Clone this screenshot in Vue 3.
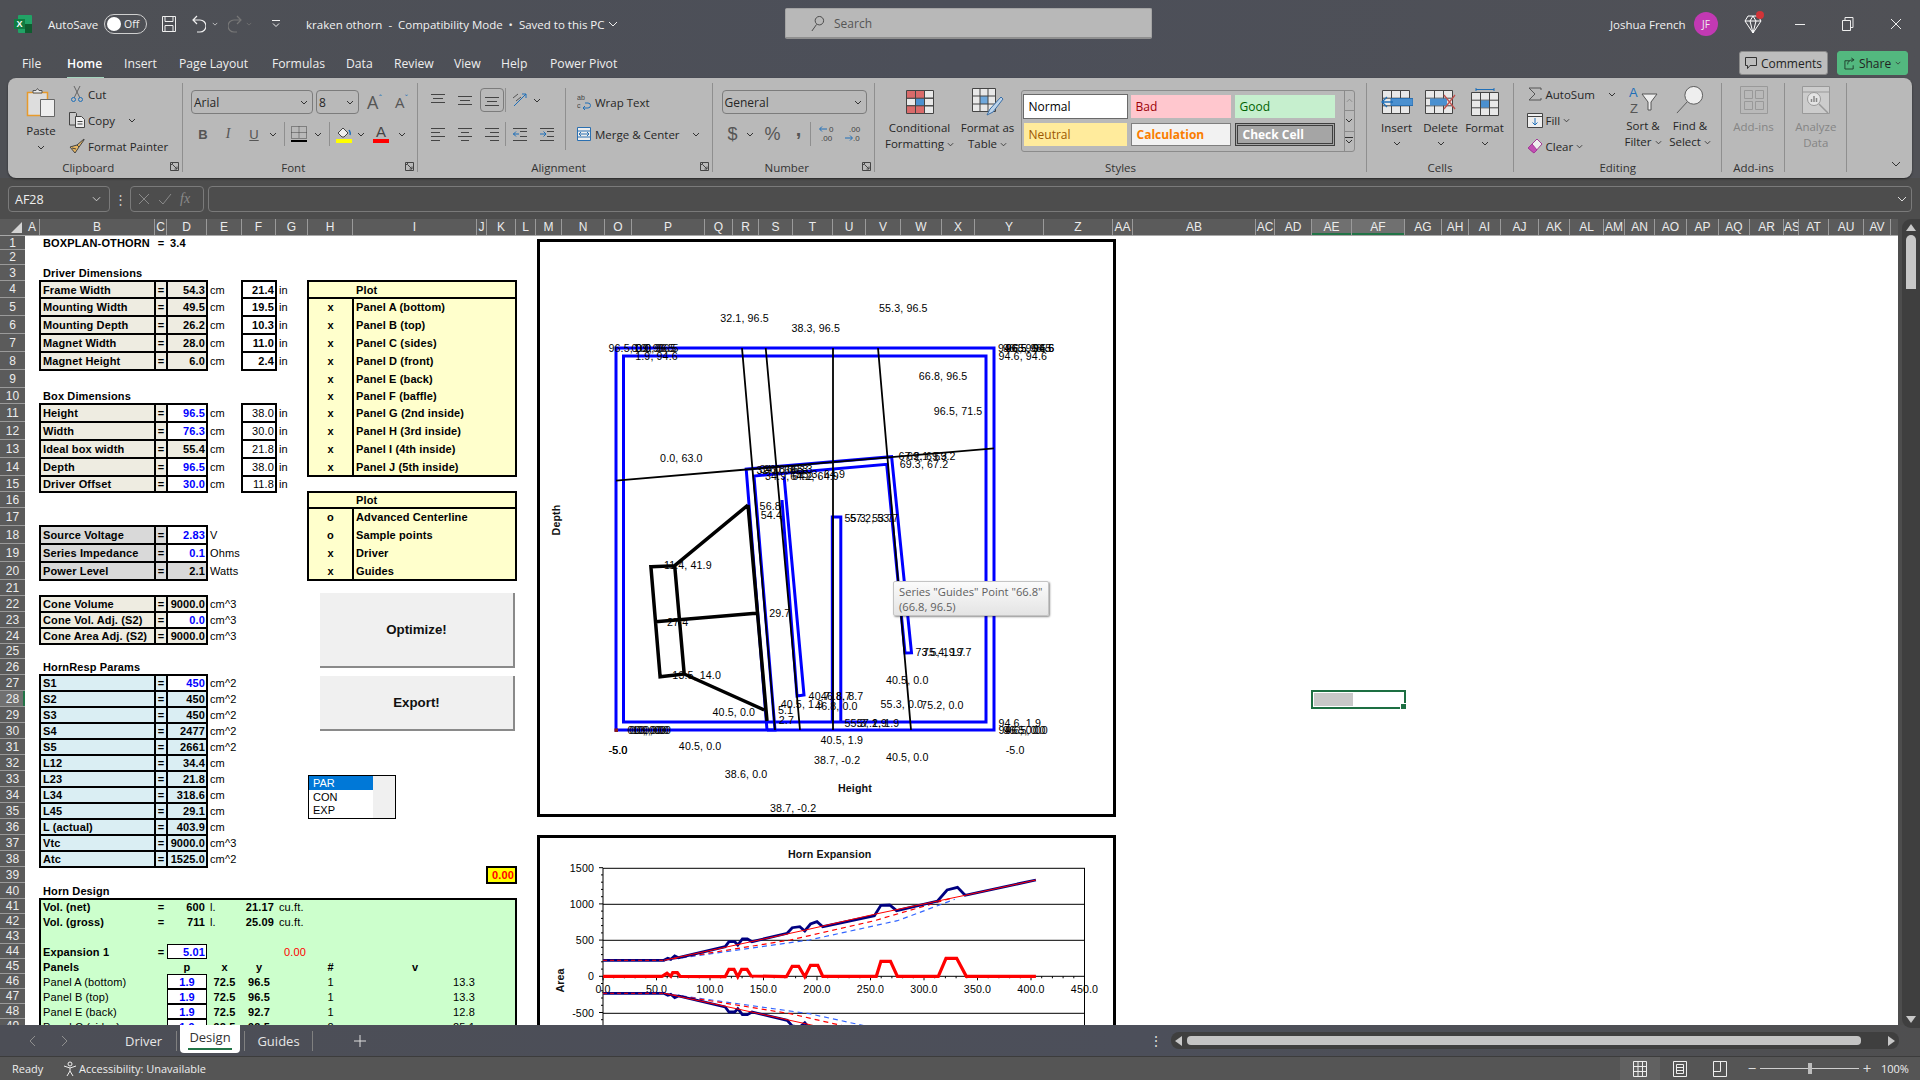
<template>
  <div class="app">
    <svg class="sprite" aria-hidden="true">
      <symbol id="chev" viewBox="0 0 8 5"><path d="M1 1l3 3 3-3" fill="none" stroke="#333" stroke-width="1"/></symbol>
      <symbol id="launch" viewBox="0 0 9 9"><path d="M.5.5h8v8h-8zM.5 2.5h2v-2M3 3l4 4M7 4.500v2.500h-2.500" fill="none" stroke="#444"/></symbol>
      <symbol id="grid" viewBox="0 0 28 24"><path d="M.5.500h27v23h-27z" fill="#e8e8e8" stroke="#444"/><path d="M9.500.5v23M18.500.5v23M.5 8.200h27M.5 15.800h27" stroke="#444" fill="none"/></symbol>
    </svg>

    <!-- title bar -->
    <header class="titlebar">
      <div class="tb-left">
        <svg class="xl-logo" viewBox="0 0 18 18" width="18" height="18">
          <rect x="4" y="0" width="14" height="18" rx="1" fill="#21a366"/>
          <rect x="11" y="9" width="7" height="9" fill="#0e5c2f"/>
          <rect x="0" y="4" width="11" height="10" fill="#107c41"/>
          <text x="5.500" y="12" text-anchor="middle" font-size="9" font-weight="700" fill="#fff" font-family="Liberation Sans, sans-serif">X</text>
        </svg>
        <span class="autosave">AutoSave</span>
        <span class="toggle"><i></i>Off</span>
        <svg class="tb-save" viewBox="0 0 14 16" width="14" height="16"><path d="M.5.5h13v15H.5zM3 .5v5h8v-5M3 15.500v-6h8v6" fill="none" stroke="#eee"/></svg>
        <svg class="tb-undo" viewBox="0 0 14 18" width="14" height="18"><path d="M5 1L1 5l4 4M1 5h7a5 5 0 0 1 0 12H5" fill="none" stroke="#f0f0f0" stroke-width="1.200"/></svg>
        <svg class="tb-chev" viewBox="0 0 8 5" width="6" height="4"><path d="M1 1l3 3 3-3" fill="none" stroke="#ddd"/></svg>
        <svg class="tb-redo" viewBox="0 0 14 18" width="14" height="18"><path d="M9 1l4 4-4 4M13 5H6a5 5 0 0 0 0 12h3" fill="none" stroke="#777" stroke-width="1.200"/></svg>
        <svg class="tb-chev dimmed" viewBox="0 0 8 5" width="6" height="4"><path d="M1 1l3 3 3-3" fill="none" stroke="#777"/></svg>
        <svg class="tb-cust" viewBox="0 0 8 8" width="8" height="8"><path d="M0 .5h8M1 3.500l3 3 3-3" fill="none" stroke="#eee"/></svg>
        <span class="doc-title">kraken othorn&nbsp; -&nbsp; Compatibility Mode&nbsp; •&nbsp; Saved to this PC</span>
        <svg class="tb-doc-chev" viewBox="0 0 10 6" width="10" height="6"><path d="M1 1l4 4 4-4" fill="none" stroke="#eee"/></svg>
      </div>
      <div class="search">
        <svg viewBox="0 0 16 18" width="15" height="17"><circle cx="10" cy="6" r="4.500" fill="none" stroke="#444"/><path d="M7 10l-5 7" stroke="#444"/></svg>
        <span>Search</span>
      </div>
      <div class="tb-right">
        <span class="user">Joshua French</span>
        <span class="avatar">JF</span>
        <span class="gem">
          <svg viewBox="0 0 18 20" width="18" height="20"><path d="M4 2h10l3 5-8 12L1 7zM1 7h16M6 7l3 12 3-12M6 7l3-5 3 5" fill="none" stroke="#fff"/></svg>
          <i></i>
        </span>
        <span class="win"><svg width="10" height="10"><path d="M0 5.500h10" stroke="#eee"/></svg></span>
        <span class="win"><svg width="12" height="14"><path d="M.5 3.500h8v10h-8zM3 3.500v-3h8v10h-2.500" fill="none" stroke="#eee"/></svg></span>
        <span class="win"><svg width="12" height="12"><path d="M1 1l10 10M11 1L1 11" stroke="#eee"/></svg></span>
      </div>
    </header>

    <!-- menu tabs -->
    <nav class="menutabs">
      <div class="tablist">
        <span v-for="t in menuTabs" :key="t" :class="{ on: t === 'Home' }"><b>{{ t }}</b></span>
      </div>
      <div class="share-wrap">
        <button class="comments">
          <svg viewBox="0 0 12 12" width="12" height="12"><path d="M.5.5h11v8H5l-2.500 3v-3h-2z" fill="none" stroke="#333"/></svg>
          Comments
        </button>
        <button class="share">
          <svg viewBox="0 0 12 14" width="11" height="13"><path d="M6 4H1v9h9V9M4 8c0-3 2-5 6-5M8 1l3 2-3 2" fill="none" stroke="#1f3a2b"/></svg>
          Share
          <svg width="6" height="4"><use href="#chev"/></svg>
        </button>
      </div>
    </nav>

    <!-- ribbon -->
    <section class="ribbon">
      <div class="group g-clip">
        <div class="body clip-body">
          <div class="paste">
            <svg viewBox="0 0 30 30" width="30" height="30">
              <path d="M1.500 5.500h20v23h-20z" fill="#ddd" stroke="#e79a2c" stroke-width="1.500"/>
              <path d="M7 6V3.500h3l1.500-2 1.500 2h3V6z" fill="#e8e8e8" stroke="#555"/>
              <path d="M14.500 12.500h14v17h-14z" fill="#eee" stroke="#666"/>
            </svg>
            <span>Paste</span>
            <svg class="ch" width="8" height="5"><use href="#chev"/></svg>
          </div>
          <div class="clip-rows">
            <div class="row">
              <svg class="ico" viewBox="0 0 12 16" width="12" height="16"><path d="M3 0l6 12M9 0L3 12" stroke="#666" fill="none"/><circle cx="2.500" cy="13.500" r="2" fill="none" stroke="#1f6fb8"/><circle cx="9.500" cy="13.500" r="2" fill="none" stroke="#1f6fb8"/></svg>
              <span>Cut</span>
            </div>
            <div class="row">
              <svg class="ico" viewBox="0 0 16 16" width="16" height="16"><path d="M.5.500h6l1 1V13h-7z" fill="#c8c8c8" stroke="#444"/><path d="M6.500 4.500h6l3 3v8h-9z" fill="#eee" stroke="#444"/><path d="M8.500 9.500h5M8.500 12h5" stroke="#444"/></svg>
              <span>Copy</span>
              <svg class="ch copy-ch" width="8" height="5"><use href="#chev"/></svg>
            </div>
            <div class="row">
              <svg class="ico" viewBox="0 0 16 16" width="16" height="16"><path d="M15 1L8 7l2 2 5-7zM8 7L1 9l5 6 4-6z" fill="#e8b660" stroke="#444"/><path d="M3 10l4 1" stroke="#444"/></svg>
              <span>Format Painter</span>
            </div>
          </div>
        </div>
        <div class="label off-launch">Clipboard</div>
        <svg class="launch" width="9" height="9"><use href="#launch"/></svg>
      </div>

      <div class="group g-font">
        <div class="body two-rows">
          <div class="font-r1">
            <span class="combo font-name">Arial<svg width="8" height="5"><use href="#chev"/></svg></span>
            <span class="combo font-size">8<svg width="8" height="5"><use href="#chev"/></svg></span>
            <span class="grow">A<sup>ˆ</sup></span>
            <span class="shrink">A<sup>ˇ</sup></span>
          </div>
          <div class="font-r2">
            <span class="fb">B</span>
            <span class="fi">I</span>
            <span class="fu">U</span>
            <svg width="8" height="5"><use href="#chev"/></svg>
            <i class="sep"></i>
            <svg viewBox="0 0 16 16" width="16" height="16"><path d="M.5.500h15v12H.5z" fill="none" stroke="#444" stroke-dasharray="1 1"/><path d="M8 .5v12M.5 6.500h15" stroke="#444" stroke-dasharray="1 1"/><path d="M0 15h16" stroke="#000" stroke-width="2"/></svg>
            <svg width="8" height="5"><use href="#chev"/></svg>
            <i class="sep"></i>
            <svg viewBox="0 0 16 18" width="16" height="18"><path d="M2 8l5-5 5 5-4 4H6z" fill="#eee" stroke="#444"/><path d="M13 5c1 2 2 3 1 5" stroke="#1f6fb8" stroke-width="1.500" fill="none"/><rect y="14" width="16" height="4" fill="#ff0"/></svg>
            <svg width="8" height="5"><use href="#chev"/></svg>
            <span class="fcolor">A<i></i></span>
            <svg width="8" height="5"><use href="#chev"/></svg>
          </div>
        </div>
        <div class="label off-launch">Font</div>
        <svg class="launch" width="9" height="9"><use href="#launch"/></svg>
      </div>

      <div class="group g-align">
        <div class="body align-body">
          <div class="align-left">
            <div class="align-r1">
              <svg viewBox="0 0 14 14" width="14" height="14"><path d="M0 1.500h14M2 5.500h10M0 9.500h14" stroke="#444"/></svg>
              <svg viewBox="0 0 14 14" width="14" height="14"><path d="M0 3.500h14M2 7.500h10M0 11.500h14" stroke="#444"/></svg>
              <span class="sel"><svg viewBox="0 0 14 14" width="14" height="14"><path d="M0 4.500h14M2 8.500h10M0 12.500h14" stroke="#444"/></svg></span>
              <span class="orient">
                <svg viewBox="0 0 16 16" width="16" height="16"><path d="M2 14L14 2M10 2h4v4" stroke="#1f6fb8" fill="none"/><path d="M1 6l5-4M4 9l5-4" stroke="#555"/></svg>
              </span>
              <svg width="8" height="5"><use href="#chev"/></svg>
            </div>
            <div class="align-r2">
              <svg viewBox="0 0 14 14" width="14" height="14"><path d="M0 1.500h14M0 5.500h9M0 9.500h14M0 13.500h9" stroke="#444"/></svg>
              <svg viewBox="0 0 14 14" width="14" height="14"><path d="M0 1.500h14M3 5.500h8M0 9.500h14M3 13.500h8" stroke="#444"/></svg>
              <svg viewBox="0 0 14 14" width="14" height="14"><path d="M0 1.500h14M5 5.500h9M0 9.500h14M5 13.500h9" stroke="#444"/></svg>
              <span class="orient"><svg viewBox="0 0 14 14" width="14" height="14"><path d="M0 1.500h14M0 13.500h14M7 4.500h7M7 9.500h7" stroke="#444"/><path d="M6 7H0M3 4.500L.5 7 3 9.500" stroke="#1f6fb8" fill="none"/></svg></span>
              <svg viewBox="0 0 14 14" width="14" height="14"><path d="M0 1.500h14M0 13.500h14M7 4.500h7M7 9.500h7" stroke="#444"/><path d="M0 7h6M3.500 4.500L6 7 3.500 9.500" stroke="#1f6fb8" fill="none"/></svg>
            </div>
          </div>
          <div class="align-right">
            <div class="row">
              <svg viewBox="0 0 14 16" width="14" height="16"><text x="0" y="6" font-size="7" fill="#444" font-family="Liberation Sans, sans-serif">ab</text><text x="0" y="14" font-size="7" fill="#444" font-family="Liberation Sans, sans-serif">c</text><path d="M8 9h3a2 2 0 0 1 0 5H6M8 12l-2 2 2 2" stroke="#1f6fb8" fill="none"/></svg>
              <span>Wrap Text</span>
            </div>
            <div class="row">
              <svg viewBox="0 0 14 16" width="14" height="16"><path d="M.5 1.500h13v13H.5z" fill="#eee" stroke="#2a6fb0"/><path d="M.5 5h13M.5 11h13M2 8h10M4 6L2 8l2 2M10 6l2 2-2 2" stroke="#2a6fb0" fill="none"/></svg>
              <span>Merge &amp; Center</span>
              <svg class="ch merge-ch" width="8" height="5"><use href="#chev"/></svg>
            </div>
          </div>
        </div>
        <div class="label off-launch">Alignment</div>
        <svg class="launch" width="9" height="9"><use href="#launch"/></svg>
      </div>

      <div class="group g-number">
        <div class="body two-rows">
          <span class="combo num-fmt">General<svg width="8" height="5"><use href="#chev"/></svg></span>
          <div class="num-r2">
            <span class="big">$</span>
            <svg width="8" height="5"><use href="#chev"/></svg>
            <span class="big">%</span>
            <span class="big comma">,</span>
            <i class="sep"></i>
            <svg viewBox="0 0 16 18" width="16" height="18"><path d="M8 4H1M3 1.500L.5 4 3 6.500" stroke="#1f6fb8" fill="none"/><text x="10" y="7" font-size="8" fill="#444" font-family="Liberation Sans, sans-serif">0</text><text x="2" y="16" font-size="8" fill="#444" font-family="Liberation Sans, sans-serif">.00</text></svg>
            <svg viewBox="0 0 16 18" width="16" height="18"><text x="4" y="7" font-size="8" fill="#444" font-family="Liberation Sans, sans-serif">.00</text><path d="M0 13h7M5 10.500L7.500 13 5 15.500" stroke="#1f6fb8" fill="none"/><text x="8" y="16" font-size="8" fill="#444" font-family="Liberation Sans, sans-serif">.0</text></svg>
          </div>
        </div>
        <div class="label off-launch">Number</div>
        <svg class="launch" width="9" height="9"><use href="#launch"/></svg>
      </div>

      <div class="group g-styles">
        <div class="body styles-body">
          <div class="large w-cond">
            <svg viewBox="0 0 28 24" width="28" height="24">
              <use href="#grid" width="28" height="24"/>
              <rect x="1" y="1" width="17" height="7" fill="#d96a6a"/><rect x="1" y="16" width="17" height="7" fill="#d96a6a"/><rect x="10" y="8.500" width="8" height="7" fill="#4a90d0"/>
              <path d="M9.500.5v23M18.500.5v23M.5 8.200h27M.5 15.800h27" stroke="#444"/>
            </svg>
            <span class="t">Conditional</span>
            <span class="t">Formatting <svg width="7" height="5"><use href="#chev"/></svg></span>
          </div>
          <div class="large w-table">
            <svg viewBox="0 0 32 28" width="32" height="28">
              <path d="M.5.500h23v23H.5z" fill="#e8e8e8" stroke="#444"/>
              <rect x="8" y="8" width="8" height="8" fill="#6fa8dc"/>
              <path d="M8 .5v23M16 .5v23M.5 8h23M.5 16h23" stroke="#444"/>
              <path d="M29 9L18 21l-3 6 6-3L31 11z" fill="#bcd3ea" stroke="#3a6ea5"/>
            </svg>
            <span class="t">Format as</span>
            <span class="t">Table <svg width="7" height="5"><use href="#chev"/></svg></span>
          </div>
          <div class="gallery">
            <div class="swatches">
              <span class="s-normal">Normal</span>
              <span class="s-bad">Bad</span>
              <span class="s-good">Good</span>
              <span class="s-neutral">Neutral</span>
              <span class="s-calc">Calculation</span>
              <span class="s-check">Check Cell</span>
            </div>
            <div class="gal-scroll">
              <span class="gal-up"><svg width="7" height="5" viewBox="0 0 8 5"><path d="M1 4l3-3 3 3" fill="none" stroke="#888"/></svg></span>
              <span><svg width="8" height="5"><use href="#chev"/></svg></span>
              <span><svg width="8" height="8" viewBox="0 0 8 8"><path d="M0 .5h8M1 3l3 3 3-3" fill="none" stroke="#333"/></svg></span>
            </div>
          </div>
        </div>
        <div class="label">Styles</div>
      </div>

      <div class="group g-cells">
        <div class="body cells-body">
          <div class="large w-cell">
            <svg viewBox="0 0 32 24" width="32" height="24">
              <use href="#grid" x="1" width="28" height="24"/>
              <rect x="10" y="8.500" width="22" height="7" fill="#4a90d0" stroke="#2a6fb0"/>
              <path d="M12 12H1M6 7l-5 5 5 5" stroke="#1f6fb8" fill="none" stroke-width="1.300"/>
            </svg>
            <span class="t">Insert</span>
            <svg class="ch" width="8" height="5"><use href="#chev"/></svg>
          </div>
          <div class="large w-cell">
            <svg viewBox="0 0 32 24" width="32" height="24">
              <use href="#grid" width="28" height="24"/>
              <rect x="5" y="8.500" width="17" height="7" fill="#4a90d0"/>
              <path d="M19 5l11 14M30 5L19 19" stroke="#c0504d" stroke-width="1.300"/>
            </svg>
            <span class="t">Delete</span>
            <svg class="ch" width="8" height="5"><use href="#chev"/></svg>
          </div>
          <div class="large w-cell">
            <svg viewBox="0 0 28 28" width="28" height="28">
              <path d="M5 1.500h18M5 0v3M23 0v3" stroke="#1f6fb8"/>
              <g transform="translate(0 4)"><use href="#grid" width="28" height="24"/><rect x="10" y="8.500" width="8" height="7" fill="#4a90d0"/></g>
            </svg>
            <span class="t">Format</span>
            <svg class="ch" width="8" height="5"><use href="#chev"/></svg>
          </div>
        </div>
        <div class="label">Cells</div>
      </div>

      <div class="group g-edit">
        <div class="body edit-body">
          <div class="edit-rows">
            <div class="row">
              <svg class="eico" viewBox="0 0 14 14" width="14" height="14"><path d="M13 3V1H1l6 6-6 6h12v-2" fill="none" stroke="#555"/></svg>
              <span>AutoSum</span>
              <svg class="ch sum-ch" width="8" height="5"><use href="#chev"/></svg>
            </div>
            <div class="row">
              <svg class="eico" viewBox="0 0 16 16" width="16" height="16"><path d="M.5 1.500h15v14H.5z" fill="#eee" stroke="#444"/><path d="M.5 4.500h15" stroke="#444"/><path d="M8 6v7M5.500 10.500L8 13l2.500-2.500" stroke="#1f6fb8" fill="none"/></svg>
              <span>Fill</span>
              <svg class="ch" width="7" height="5"><use href="#chev"/></svg>
            </div>
            <div class="row">
              <svg class="eico" viewBox="0 0 16 16" width="16" height="16"><path d="M10 1l5 5-8 9-6-5z" fill="#eee" stroke="#a43a97"/><path d="M1 10l6 5 3-3-5-6z" fill="#c24fb3" stroke="#a43a97"/></svg>
              <span>Clear</span>
              <svg class="ch" width="7" height="5"><use href="#chev"/></svg>
            </div>
          </div>
          <div class="large w-sort">
            <svg viewBox="0 0 30 28" width="30" height="28">
              <text x="1" y="11" font-size="13" fill="#1f6fb8" font-family="Liberation Sans, sans-serif">A</text>
              <text x="2" y="27" font-size="13" fill="#555" font-family="Liberation Sans, sans-serif">Z</text>
              <path d="M14 8h15l-6 8v8h-3v-8z" fill="#eee" stroke="#555"/>
            </svg>
            <span class="t">Sort &amp;</span>
            <span class="t">Filter <svg width="7" height="5"><use href="#chev"/></svg></span>
          </div>
          <div class="large w-find">
            <svg viewBox="0 0 30 30" width="30" height="30">
              <circle cx="19" cy="10" r="9.500" fill="#eee" stroke="#555"/>
              <path d="M12 17L1 29" stroke="#555"/>
            </svg>
            <span class="t">Find &amp;</span>
            <span class="t">Select <svg width="7" height="5"><use href="#chev"/></svg></span>
          </div>
        </div>
        <div class="label">Editing</div>
      </div>

      <div class="group g-addin">
        <div class="body large-solo">
          <div class="large dim">
            <svg viewBox="0 0 28 28" width="28" height="28"><path d="M.5.500h27v27H.5zM4.500 4.500h8v8h-8zM15.500 4.500h8v8h-8zM4.500 15.500h8v8h-8zM15.500 15.500h8v8h-8z" fill="none" stroke="#999"/></svg>
            <span class="t">Add-ins</span>
          </div>
        </div>
        <div class="label">Add-ins</div>
      </div>

      <div class="group g-analyze">
        <div class="body large-solo">
          <div class="large dim">
            <svg viewBox="0 0 28 28" width="28" height="28"><path d="M.5.500h27v27H.5zM.5 6h27" fill="#ccc" stroke="#999"/><circle cx="12" cy="13" r="6.500" fill="#e4e4e4" stroke="#999"/><path d="M17 18l9 9" stroke="#999" stroke-width="1.500"/><path d="M9.500 16v-3M12 16v-6M14.500 16v-4" stroke="#888" stroke-width="1.500"/></svg>
            <span class="t">Analyze</span>
            <span class="t">Data</span>
          </div>
        </div>
      </div>

      <svg class="collapse" viewBox="0 0 10 6" width="10" height="6"><path d="M1 1l4 4 4-4" fill="none" stroke="#333"/></svg>
    </section>

    <!-- formula bar -->
    <div class="fbar">
      <div class="namebox"><span>AF28</span><svg viewBox="0 0 10 6" width="9" height="6"><path d="M1 1l4 4 4-4" fill="none" stroke="#ddd"/></svg></div>
      <span class="fdots">⋮</span>
      <div class="fxbox">
        <svg viewBox="0 0 12 12" width="12" height="12"><path d="M1 1l10 10M11 1L1 11" stroke="#8a8a8a"/></svg>
        <svg viewBox="0 0 14 12" width="14" height="12"><path d="M1 7l4 4 8-10" fill="none" stroke="#8a8a8a"/></svg>
        <em>fx</em>
      </div>
      <div class="finput"><svg viewBox="0 0 10 6" width="10" height="6"><path d="M1 1l4 4 4-4" fill="none" stroke="#ddd"/></svg></div>
    </div>

    <!-- sheet area -->
    <div class="main">
      <div class="sheet-col">
        <div class="colhead" :style="{ gridTemplateColumns: colTemplate }">
          <div class="corner"><i></i></div>
          <div v-for="(n, i) in colNames" :key="i" :class="['ch-cell', { act: n === 'AE' || n === 'AF' }]">{{ n }}</div>
        </div>
        <div class="sheet">
          <div class="rowhead">
            <div v-for="(h, i) in rowHeights" :key="i" :class="['rh-cell', { act: i + 1 === 28 }]" :style="{ height: h + 'px' }">{{ i + 1 }}</div>
          </div>
          <div class="grid" :style="{ gridTemplateColumns: gridTemplate, gridTemplateRows: rowTemplate }">
            <div v-for="c in cells" :key="c.key" :class="['cell', c.cls]" :style="c.style">{{ c.text }}</div>

            <!-- floating objects -->
            <button class="xl-btn b-opt">Optimize!</button>
            <button class="xl-btn b-exp">Export!</button>
            <div class="listbox">
              <div class="lb-items"><div class="lb-sel">PAR</div><div>CON</div><div>EXP</div></div>
              <div class="lb-bar"></div>
            </div>

            <svg class="chart c1" viewBox="537 239 579 578" width="579" height="578">
              <rect x="538.500" y="240.500" width="576" height="575" fill="#fff" stroke="#000" stroke-width="3"/>
              <g fill="none" stroke="#0000ff" stroke-width="3">
                <rect x="616" y="348" width="378" height="382"/>
                <rect x="623.500" y="356" width="362.500" height="366"/>
                <polyline points="767,730 746.200,469 891.600,456.700 911.500,652.700 905,653 886.700,464.300 754,476 775,730 767,730"/>
                <polyline points="784.100,476.700 804,695 797,696 782,500"/>
                <polyline points="832.300,722 832.300,517 840.800,517 840.800,722"/>
              </g>
              <g fill="none" stroke="#000" stroke-width="1.800">
                <path d="M742 348L775 730M765.700 348L800 730M833 348V730M878 348L911 730M616 480.700L994 448.300"/>
              </g>
              <g fill="none" stroke="#000" stroke-width="3.500">
                <path d="M650.900 566.700L674.700 565.700L684.200 674L660.100 676.700ZM655.500 621.700L755.800 613.300M674.700 565.700L748 505M684.200 674L764.200 710M748 505L767 721"/>
              </g>
              <rect x="614.500" y="728.500" width="3.500" height="3.500" fill="#8b1a1a"/>
              <text v-for="(l, i) in plotLabels" :key="i" class="lbl" :x="l.x" :y="l.y">{{ l.t }}</text>
              <text class="lbl-b" x="838" y="791.500">Height</text>
              <text class="lbl-b" transform="translate(559.500 520) rotate(-90)" text-anchor="middle">Depth</text>
            </svg>
            <div class="tooltip">Series "Guides" Point "66.8"<br>(66.8, 96.5)</div>

            <svg class="chart c2" viewBox="537 835 579 300" width="579" height="300">
              <rect x="538.500" y="836.500" width="576" height="296" fill="#fff" stroke="#000" stroke-width="3"/>
              <text class="lbl-b" x="829.700" y="857.500" text-anchor="middle">Horn Expansion</text>
              <rect x="603" y="868.300" width="481.500" height="260" fill="none" stroke="#000" stroke-width="1"/>
              <path d="M603 904.300H1084.500M603 940.300H1084.500M603 1013.300H1084.500" stroke="#000" stroke-width="1"/>
              <path d="M603 976.300H1084.500" stroke="#000" stroke-width="1"/>
              <path :d="ticks" stroke="#000" stroke-width="1" fill="none"/>
              <text v-for="y in yTicks" :key="y.t" class="lbl" :x="594" :y="y.y" text-anchor="end">{{ y.t }}</text>
              <text v-for="x in xTicks" :key="x.t" class="lbl" :x="x.x" y="992.500" text-anchor="middle">{{ x.t }}</text>
              <text class="lbl-b" transform="translate(564 980.500) rotate(-90)" text-anchor="middle">Area</text>

              <polyline :points="blueDash" fill="none" stroke="#3366ff" stroke-width="1.200" stroke-dasharray="5 4"/>
              <polyline :points="blueDashB" fill="none" stroke="#3366ff" stroke-width="1.200" stroke-dasharray="5 4"/>
              <polyline :points="redDash" fill="none" stroke="#ff0000" stroke-width="1.200" stroke-dasharray="5 4"/>
              <polyline :points="redDashB" fill="none" stroke="#ff0000" stroke-width="1.200" stroke-dasharray="5 4"/>
              <polyline :points="navyTop" fill="none" stroke="#000080" stroke-width="2.800"/>
              <polyline :points="navyBot" fill="none" stroke="#000080" stroke-width="2.800"/>
              <polyline :points="redTop" fill="none" stroke="#ff0000" stroke-width="1"/>
              <polyline :points="redBot" fill="none" stroke="#ff0000" stroke-width="1"/>
              <polyline :points="redFlatTop" fill="none" stroke="#ff0000" stroke-width="1" stroke-dasharray="4 3"/>
              <polyline :points="redFlatBot" fill="none" stroke="#ff0000" stroke-width="1" stroke-dasharray="4 3"/>
              <polyline :points="redThick" fill="none" stroke="#ff0000" stroke-width="3.200"/>
            </svg>

            <div class="selection"><i class="sel-fill"></i><i class="handle"></i></div>
          </div>
        </div>
      </div>
      <div class="vbar">
        <div class="vtrack">
          <svg viewBox="0 0 10 7" width="10" height="7" class="varrow"><path d="M5 0l5 7H0z" fill="#c8c8c8"/></svg>
          <div class="vthumb"></div>
          <svg viewBox="0 0 10 7" width="10" height="7" class="varrow down"><path d="M5 7L0 0h10z" fill="#c8c8c8"/></svg>
        </div>
      </div>
    </div>

    <!-- sheet tabs -->
    <div class="tabbar">
      <span class="nav-arrow first"><svg viewBox="0 0 7 12" width="7" height="12"><path d="M6 1L1 6l5 5" fill="none" stroke="#8f8f8f"/></svg></span>
      <span class="nav-arrow"><svg viewBox="0 0 7 12" width="7" height="12"><path d="M1 1l5 5-5 5" fill="none" stroke="#8f8f8f"/></svg></span>
      <span class="stab s1">Driver</span>
      <span class="stab active">Design</span>
      <span class="stab s3">Guides</span>
      <span class="plus"><svg viewBox="0 0 12 12" width="12" height="12"><path d="M6 0v12M0 6h12" stroke="#ddd"/></svg></span>
      <span class="hdots">⋮</span>
      <div class="htrack">
        <svg viewBox="0 0 7 10" width="7" height="10"><path d="M0 5l7-5v10z" fill="#c8c8c8"/></svg>
        <div class="hthumb"></div>
        <svg class="hright" viewBox="0 0 7 10" width="7" height="10"><path d="M7 5L0 0v10z" fill="#c8c8c8"/></svg>
      </div>
    </div>

    <!-- status bar -->
    <footer class="status">
      <span class="ready">Ready</span>
      <svg class="acc-ico" viewBox="0 0 16 16" width="16" height="16"><circle cx="8" cy="3" r="2" fill="none" stroke="#eee"/><path d="M2 5l6 2 6-2M8 7v3l-3 5M8 10l3 5" fill="none" stroke="#eee"/></svg>
      <span class="acc">Accessibility: Unavailable</span>
      <div class="views">
        <span class="view on"><svg viewBox="0 0 14 16" width="14" height="16"><path d="M.5.500h13v15H.5zM5 .5v15M9.500.5v15M.5 5.500h13M.5 10.500h13" fill="none" stroke="#eee"/></svg></span>
        <span class="view"><svg viewBox="0 0 14 16" width="14" height="16"><path d="M.5.500h13v15H.5zM3.500 3.500h7v9h-7zM3.500 6.500h7M3.500 9.500h7" fill="none" stroke="#eee"/></svg></span>
        <span class="view"><svg viewBox="0 0 14 16" width="14" height="16"><path d="M.5.500h13v15H.5zM.5 10.500h7V.5" fill="none" stroke="#eee"/></svg></span>
      </div>
      <div class="zoomer">
        <span class="zm">−</span>
        <div class="slider"><i></i></div>
        <span class="zm">+</span>
      </div>
      <span class="pct">100%</span>
    </footer>
  </div>
</template>

<script setup>
const menuTabs = ['File', 'Home', 'Insert', 'Page Layout', 'Formulas', 'Data', 'Review', 'View', 'Help', 'Power Pivot']

// column edges measured on the sheet, the first edge is the end of the row header
const edges = [25, 40, 155, 167, 207, 242, 276, 308, 353, 477, 487, 516, 536, 562, 605, 632, 705, 733, 759, 793, 833, 866, 901, 942, 975, 1044, 1113, 1133, 1256, 1275, 1312, 1352, 1405, 1442, 1469, 1501, 1539, 1570, 1604, 1625, 1655, 1687, 1719, 1750, 1784, 1799, 1829, 1864, 1891, 1898]
const letters = 'ABCDEFGHIJKLMNOPQRSTUVWXYZ'.split('')
const colNames = [...letters, ...'ABCDEFGHIJKLMNOPQRSTUV'.split('').map(l => 'A' + l), '']
const widths = edges.slice(1).map((e, i) => e - edges[i])
const gridTemplate = widths.map(w => w + 'px').join(' ')
const colTemplate = '25px ' + gridTemplate

const rowHeights = [14, 15, 16, 17, 18, 18, 18, 18, 18, 16, 18, 18, 18, 18, 16, 16, 18, 18, 18, 18, 16, 16, 16, 16, 15, 16, 16, 16, 16, 16, 16, 16, 16, 16, 16, 16, 16, 16, 16, 16, 15, 15, 15, 15, 15, 15, 15, 15, 15]
const rowTemplate = rowHeights.map(h => h + 'px').join(' ')

const cells = []
const col = n => colNames.indexOf(n) + 1
const put = (r, c1, c2, text, cls = '', r2 = r) => {
  cells.push({ key: cells.length, text, cls, style: { gridArea: `${r} / ${col(c1)} / ${r2 + 1} / ${col(c2) + 1}` } })
}

const boxRow = (r, label, val, unit, bg, valCls) => {
  put(r, 'B', 'B', label, 'bx lab b ' + bg)
  put(r, 'C', 'C', '=', 'bx ctr b ' + bg)
  put(r, 'D', 'D', val, 'bx num b ' + valCls)
  put(r, 'E', 'E', unit, 'unit')
}
const inRow = (r, val, cls = '') => {
  put(r, 'F', 'F', val, 'bx num ' + cls)
  put(r, 'G', 'G', 'in', 'unit')
}

put(1, 'B', 'B', 'BOXPLAN-OTHORN', 'plain b')
put(1, 'C', 'C', '=', 'ctr b')
put(1, 'D', 'D', '3.4', 'plain b')
put(3, 'B', 'B', 'Driver Dimensions', 'plain b')

const driver = [['Frame Width', '54.3', '21.4'], ['Mounting Width', '49.5', '19.5'], ['Mounting Depth', '26.2', '10.3'], ['Magnet Width', '28.0', '11.0'], ['Magnet Height', '6.0', '2.4']]
driver.forEach((d, i) => {
  boxRow(4 + i, d[0], d[1], 'cm', 'beige', 'beige')
  inRow(4 + i, d[2], 'b')
})

put(10, 'B', 'B', 'Box Dimensions', 'plain b')
const box = [['Height', '96.5', '38.0', 'inp'], ['Width', '76.3', '30.0', 'inp'], ['Ideal box width', '55.4', '21.8', 'beige'], ['Depth', '96.5', '38.0', 'inp'], ['Driver Offset', '30.0', '11.8', 'inp']]
box.forEach((d, i) => {
  boxRow(11 + i, d[0], d[1], 'cm', 'beige', d[3])
  inRow(11 + i, d[2])
})

boxRow(18, 'Source Voltage', '2.83', 'V', 'gray', 'inp')
boxRow(19, 'Series Impedance', '0.1', 'Ohms', 'gray', 'inp')
boxRow(20, 'Power Level', '2.1', 'Watts', 'gray', 'gray')

boxRow(22, 'Cone Volume', '9000.0', 'cm^3', 'beige', 'beige')
boxRow(23, 'Cone Vol. Adj. (S2)', '0.0', 'cm^3', 'beige', 'inp')
boxRow(24, 'Cone Area Adj. (S2)', '9000.0', 'cm^3', 'beige', 'beige')

put(26, 'B', 'B', 'HornResp Params', 'plain b')
const horn = [['S1', '450', 'cm^2', 'sky blue'], ['S2', '450', 'cm^2'], ['S3', '450', 'cm^2'], ['S4', '2477', 'cm^2'], ['S5', '2661', 'cm^2'], ['L12', '34.4', 'cm'], ['L23', '21.8', 'cm'], ['L34', '318.6', 'cm'], ['L45', '29.1', 'cm'], ['L (actual)', '403.9', 'cm'], ['Vtc', '9000.0', 'cm^3'], ['Atc', '1525.0', 'cm^2']]
horn.forEach((d, i) => boxRow(27 + i, d[0], d[1], d[2], 'sky', d[3] || 'sky'))

// plot tables
const plotTable = (top, items) => {
  const last = top + items.length
  put(top, 'H', 'K', '', 'bx lemon', last)
  put(top, 'H', 'K', '', 'hline')
  put(top, 'I', 'K', 'Plot', 'plain b')
  put(top + 1, 'H', 'H', '', 'vline', last)
  items.forEach((it, i) => {
    put(top + 1 + i, 'H', 'H', it[0], 'ctr b')
    put(top + 1 + i, 'I', 'K', it[1], 'plain b')
  })
}
plotTable(4, [['x', 'Panel A (bottom)'], ['x', 'Panel B (top)'], ['x', 'Panel C (sides)'], ['x', 'Panel D (front)'], ['x', 'Panel E (back)'], ['x', 'Panel F (baffle)'], ['x', 'Panel G (2nd inside)'], ['x', 'Panel H (3rd inside)'], ['x', 'Panel I (4th inside)'], ['x', 'Panel J (5th inside)']])
plotTable(16, [['o', 'Advanced Centerline'], ['o', 'Sample points'], ['x', 'Driver'], ['x', 'Guides']])

put(39, 'K', 'K', '0.00', 'bx num b warn')

// horn design panel
put(40, 'B', 'B', 'Horn Design', 'plain b')
put(41, 'B', 'K', '', 'bx green', 49)
const vol = [[41, 'Vol. (net)', '600', 'l.', '21.17'], [42, 'Vol. (gross)', '711', 'l.', '25.09']]
vol.forEach(v => {
  put(v[0], 'B', 'B', v[1], 'plain b')
  put(v[0], 'C', 'C', '=', 'ctr b')
  put(v[0], 'D', 'D', v[2], 'plain right b')
  put(v[0], 'E', 'E', v[3], 'unit')
  put(v[0], 'F', 'F', v[4], 'plain right b')
  put(v[0], 'G', 'G', 'cu.ft.', 'unit')
})
put(44, 'B', 'B', 'Expansion 1', 'plain b')
put(44, 'C', 'C', '=', 'ctr b')
put(44, 'D', 'D', '5.01', 'thin num b blue')
put(44, 'G', 'G', '0.00', 'plain right red')
put(45, 'B', 'B', 'Panels', 'plain b')
put(45, 'D', 'D', 'p', 'ctr b')
put(45, 'E', 'E', 'x', 'ctr b')
put(45, 'F', 'F', 'y', 'ctr b')
put(45, 'H', 'H', '#', 'ctr b')
put(45, 'I', 'I', 'v', 'ctr b')
const panels = [['Panel A (bottom)', '72.5', '96.5', '1', '13.3'], ['Panel B (top)', '72.5', '96.5', '1', '13.3'], ['Panel E (back)', '72.5', '92.7', '1', '12.8'], ['Panel C (sides)', '92.5', '92.5', '2', '25.1']]
panels.forEach((p, i) => {
  const r = 46 + i
  put(r, 'B', 'B', p[0], 'plain')
  put(r, 'D', 'D', '1.9', 'thin ctr b blue')
  put(r, 'E', 'E', p[1], 'ctr b')
  put(r, 'F', 'F', p[2], 'ctr b')
  put(r, 'H', 'H', p[3], 'ctr')
  put(r, 'I', 'I', p[4], 'plain right')
})

// chart labels: first number is x, second the vertical centre, both as read on the zoomed crops
const top = [[497, 265, '32.1, 96.5'], [683, 295, '38.3, 96.5'], [912, 235, '55.3, 96.5'], [205, 355, '96.5, 0.0'], [265, 355, '0.0, 96.5'], [271, 355, '1.9, 96.5'], [277, 355, '0.0, 96.5'], [275, 379, '1.9, 94.6'], [1223, 355, '94.6, 96.5'], [1235, 355, '96.5, 96.5'], [1243, 355, '96.5, 96.5'], [1243, 355, '96.5, 94.6'], [1224, 379, '94.6, 94.6'], [1016, 438, '66.8, 96.5'], [1055, 544, '96.5, 71.5'], [340, 685, '0.0, 63.0'], [963, 680, '67.2, 69.3'], [985, 680, '69.1, 69.2'], [966, 704, '69.3, 67.2'], [592, 720, '32.1, 66.3'], [600, 718, '34.0, 66.3'], [611, 718, '36.8, 65.3'], [614, 740, '34.9, 64.2'], [680, 738, '64.2, 64.9'], [696, 733, '55.3, 64.9'], [600, 828, '56.8'], [603, 856, '54.4'], [822, 866, '55.3, 53.7'], [836, 866, '57.2, 53.7']]
const low = [[350, 137, '11.4, 41.9'], [358, 308, '27.4'], [625, 280, '29.7'], [372, 467, '13.5, 14.0'], [477, 577, '40.5, 0.0'], [648, 572, '5.1'], [650, 600, '2.7'], [655, 553, '40.5, 1.9'], [745, 558, '46.8, 0.0'], [728, 528, '40.7, 8.7'], [760, 528, '46.8, 8.7'], [930, 481, '40.5, 0.0'], [916, 553, '55.3, 0.0'], [1022, 556, '75.2, 0.0'], [1007, 398, '73.5, 19.7'], [1027, 398, '75.4, 19.7'], [822, 611, '55.3, 1.9'], [854, 611, '57.2, 1.9'], [255, 630, '0.0, 0.0'], [260, 630, '0.0, 0.0'], [268, 630, '1.9, 0.0'], [273, 630, '0.0, 0.0'], [1224, 610, '94.6, 1.9'], [1224, 630, '94.6, 0.0'], [1236, 630, '96.5, 0.0'], [1242, 630, '96.5, 0.0'], [205, 691, '-5.0'], [206, 691, '-5.0'], [1243, 690, '-5.0'], [389, 679, '40.5, 0.0'], [509, 763, '38.6, 0.0'], [742, 721, '38.7, -0.2'], [759, 661, '40.5, 1.9'], [930, 712, '40.5, 0.0'], [627, 865, '38.7, -0.2']]
const plotLabels = [
  ...top.map(l => ({ x: 530 + l[0] / 2.613, y: 230 + l[1] / 3 + 3.6, t: l[2] })),
  ...low.map(l => ({ x: 530 + l[0] / 2.613, y: 520 + l[1] / 3 + 3.6, t: l[2] }))
]

// horn expansion chart
const pts = list => list.map(p => `${(530 + p[0] / 2.613).toFixed(1)},${(830 + p[1] / 3).toFixed(1)}`).join(' ')
const mirror = list => list.map(p => [p[0], 881 - p[1]])
const navy = [[191, 391], [350, 391], [360, 385], [368, 388], [378, 378], [388, 383], [510, 350], [520, 335], [535, 335], [543, 345], [555, 327], [568, 327], [580, 335], [672, 310], [685, 293], [705, 290], [718, 303], [733, 282], [750, 275], [765, 290], [900, 257], [917, 226], [940, 225], [958, 242], [1065, 213], [1090, 180], [1117, 172], [1137, 196], [1322, 150]]
const redLine = [[350, 391], [510, 352], [720, 300], [900, 253], [1137, 196], [1322, 150]]
const blue = [[350, 391], [730, 330], [960, 272], [1110, 208]]
const red2 = [[350, 391], [680, 330], [900, 272], [1100, 205]]
const navyTop = pts(navy)
const navyBot = pts(mirror(navy))
const redTop = pts(redLine)
const redBot = pts(mirror(redLine))
const blueDash = pts(blue)
const blueDashB = pts(mirror(blue))
const redDash = pts(red2)
const redDashB = pts(mirror(red2))
const redFlatTop = pts([[191, 391], [350, 391]])
const redFlatBot = pts([[191, 490], [350, 490]])
const redThick = pts([[191, 439], [345, 439], [358, 430], [368, 439], [373, 428], [385, 428], [392, 439], [510, 440], [520, 418], [533, 418], [543, 440], [553, 418], [567, 418], [578, 438], [670, 440], [685, 409], [702, 409], [718, 440], [733, 406], [752, 406], [765, 439], [905, 439], [917, 394], [942, 394], [960, 439], [1067, 439], [1087, 385], [1115, 385], [1140, 439], [1322, 439]])

const yTicks = [['1500', 868.3], ['1000', 904.3], ['500', 940.3], ['0', 976.3], ['-500', 1013.3]].map(t => ({ t: t[0], y: t[1] + 3.8 }))
const xTicks = []
for (let v = 0; v <= 450; v += 50) xTicks.push({ t: v.toFixed(1), x: 603 + v * 1.07 })
let ticks = ''
for (let v = 0; v <= 450; v += 10) {
  const x = 603 + v * 1.07
  ticks += `M${x.toFixed(1)} 976.3v${v % 50 === 0 ? 4 : 2}`
}
for (let v = -1000; v <= 1500; v += 100) {
  const y = 976.3 - v * 0.0724
  ticks += `M603 ${y.toFixed(1)}h${v % 500 === 0 ? -4 : -2}`
}
</script>

<style>
html, body { margin: 0; background: #4f5157; overflow: hidden; }
</style>

<style scoped>
.app {
  width: 1920px;
  height: 1080px;
  display: flex;
  flex-direction: column;
  overflow: hidden;
  font-family: "Open Sans", "Liberation Sans", sans-serif;
  font-size: 11.5px;
  color: #262626;
  background: linear-gradient(90deg, #4e5055, #4c4f59 50%, #505156);
}
.sprite { position: absolute; width: 0; height: 0; }

/* title bar */
.titlebar {
  height: 48px;
  flex: none;
  display: grid;
  grid-template-columns: 785px 367px 1fr;
  color: #f2f2f2;
}
.tb-left { display: flex; align-items: center; padding-left: 14px; height: 48px; }
.xl-logo { flex: none; }
.autosave { margin-left: 16px; width: 56px; font-size: 11.5px; }
.toggle {
  width: 43px; height: 20px; box-sizing: border-box; margin-right: 15px;
  border: 1px solid #cfcfcf; border-radius: 10px; display: flex; align-items: center; font-size: 10.5px; gap: 3px; padding-left: 2px;
}
.toggle i { width: 14px; height: 14px; border-radius: 50%; background: #fff; }
.tb-undo { margin-left: 16px; }
.tb-chev { margin-left: 6px; }
.tb-redo { margin-left: 10px; }
.tb-chev.dimmed { margin-left: 4px; }
.tb-cust { margin-left: 20px; }
.doc-title { margin-left: 26px; font-size: 11.5px; white-space: nowrap; }
.tb-doc-chev { margin-left: 3px; }
.search {
  margin-top: 8px; height: 31px; box-sizing: border-box; background: #b8b8b8; border: 1px solid #a4a4a4; border-bottom: 2px solid #8f8f8f; border-radius: 2px;
  display: flex; align-items: center; padding-left: 24px; gap: 9px; color: #555; font-size: 12px;
}
.tb-right { display: flex; align-items: center; padding-left: 458px; height: 48px; }
.user { width: 74px; white-space: nowrap; font-size: 11.5px; }
.avatar {
  margin-left: 10px; width: 24px; height: 24px; border-radius: 50%; background: #c239b3; color: #eee;
  display: flex; align-items: center; justify-content: center; font-size: 10px;
}
.gem { margin-left: 25px; width: 20px; position: relative; display: flex; justify-content: center; }
.gem i { position: absolute; right: -1px; top: -3px; width: 8px; height: 8px; border-radius: 50%; background: #d13438; }
.win { width: 48px; display: flex; justify-content: center; }
.gem + .win { margin-left: 13px; }

/* menu tabs */
.menutabs { height: 30px; flex: none; display: flex; justify-content: space-between; }
.tablist {
  display: grid;
  grid-template-columns: 45px 57px 55px 93px 74px 48px 60px 47px 49px 90px;
  padding-left: 22px;
  color: #eee;
  font-size: 12.2px;
  height: 30px;
  align-items: center;
}
.tablist b { font-weight: 400; white-space: nowrap; }
.tablist .on { height: 26px; display: flex; align-items: center; }
.tablist .on b { display: block; font-weight: 600; color: #fff; height: 26px; line-height: 26px; width: 37px; border-bottom: 2px solid #a9dcc3; box-sizing: content-box; margin-top: 3px; }
.share-wrap { display: flex; gap: 9px; margin: 3px 12px 0 0; }
.comments, .share {
  height: 24px; padding: 0; border: 1px solid #8a8a8a; border-radius: 3px; background: #bdbdbd; font: inherit; font-size: 12px; color: #222;
  display: flex; align-items: center; justify-content: center; gap: 4px;
}
.comments { width: 89px; }
.share { width: 71px; background: #53b87f; border-color: #53b87f; }

/* ribbon */
.ribbon {
  height: 100px;
  flex: none;
  margin: 0 8px;
  background: #b9b9b9;
  border-radius: 8px;
  display: flex;
  position: relative;
  box-shadow: 0 1px 2px rgba(0, 0, 0, .5);
  white-space: nowrap;
}
.group { position: relative; flex: none; display: flex; flex-direction: column; }
.group::after { content: ""; position: absolute; right: 0; top: 5px; bottom: 6px; width: 1px; background: #8f8f8f; }
.g-clip { width: 174.5px; }
.g-font { width: 235.5px; }
.g-align { width: 295px; }
.g-number { width: 161.5px; }
.g-styles { width: 492px; }
.g-cells { width: 147px; }
.g-edit { width: 208.5px; }
.g-addin { width: 63px; }
.g-analyze { width: 61.5px; }
.body { height: 81px; box-sizing: border-box; }
.label { height: 19px; line-height: 17px; text-align: center; color: #333; }
.label.off-launch { padding-right: 14px; }
.launch { position: absolute; right: 4px; bottom: 7px; }
.row { display: flex; align-items: center; height: 26px; }
.ch { flex: none; }
svg { flex: none; }

.clip-body { display: flex; padding-top: 3px; }
.paste { width: 50px; margin-left: 8px; display: flex; flex-direction: column; align-items: center; padding-top: 6px; }
.paste span { margin-top: 6px; line-height: 16px; }
.paste .ch { margin-top: 6px; }
.clip-rows .ico { width: 22px; flex: none; }
.copy-ch { margin-left: 13px; }

.two-rows { padding: 12px 0 0 8.5px; }
.font-r1 { display: flex; align-items: center; height: 24px; }
.combo {
  height: 24px; box-sizing: border-box; border: 1px solid #7c7c7c; border-radius: 4px; display: flex; align-items: center; justify-content: space-between;
  padding: 0 4px 0 2px; font-size: 12px;
}
.font-name { width: 122px; }
.font-size { width: 43px; margin-left: 3px; }
.grow { margin-left: 8px; width: 28px; font-size: 18px; color: #555; line-height: 24px; }
.shrink { width: 20px; font-size: 15px; color: #555; line-height: 24px; }
.grow sup, .shrink sup { font-size: 9px; color: #1f6fb8; line-height: 0; }
.font-r2 {
  display: grid;
  grid-template-columns: 24px 26px 26px 12px 10px 20px 18px 4px 26px 8px 32px 10px;
  margin-top: 8px; height: 24px; align-items: center; justify-items: center;
}
.fb, .fi, .fu { font-family: "Liberation Serif", serif; font-size: 14px; color: #555; }
.fb { font-weight: 700; font-family: "Liberation Sans", sans-serif; font-size: 13px; }
.fi { font-style: italic; }
.fu { text-decoration: underline; font-family: "Liberation Sans", sans-serif; font-size: 13px; }
.sep { display: block; width: 1px; height: 24px; background: #8f8f8f; }
.fcolor { display: flex; flex-direction: column; align-items: center; font-size: 15px; line-height: 14px; color: #444; font-family: "Liberation Sans", sans-serif; }
.fcolor i { display: block; width: 16px; height: 4px; background: #f00; }

.align-body { display: flex; padding: 10px 0 0 7px; }
.align-left { width: 140px; }
.align-r1, .align-r2 { display: grid; align-items: center; justify-items: center; }
.align-r1 { grid-template-columns: 26px 27px 27px 28px 8px; height: 24px; }
.align-r2 { grid-template-columns: 26px 27px 27px 28px 27px; height: 24px; margin-top: 10px; }
.sel { width: 24px; height: 24px; box-sizing: border-box; border: 1px solid #7c7c7c; border-radius: 4px; display: flex; align-items: center; justify-content: center; }
.orient { width: 100%; height: 24px; display: flex; align-items: center; justify-content: center; border-left: 1px solid #8f8f8f; box-sizing: border-box; }
.align-right { border-left: 1px solid #8f8f8f; height: 62px; padding-left: 11px; box-sizing: border-box; }
.align-right .row { height: 24px; gap: 4px; margin-top: 2px; }
.align-right .row + .row { margin-top: 8px; }
.merge-ch { margin-left: 8px; }

.num-fmt { width: 145px; }
.num-r2 {
  display: grid; grid-template-columns: 22px 12px 34px 18px 6px 26px 26px; justify-items: center; align-items: center; height: 24px; margin-top: 8px;
}
.big { font-size: 18px; color: #555; line-height: 24px; font-family: "Liberation Sans", sans-serif; }
.comma { font-weight: 700; font-size: 20px; line-height: 16px; transform: translateY(-5px); }

.large { display: flex; flex-direction: column; align-items: center; }
.large > svg:first-child { height: 28px; margin-bottom: 4px; }
.large .t { line-height: 16px; display: flex; align-items: center; gap: 3px; white-space: nowrap; }
.large .ch { margin-top: 5px; }
.dim .t { color: #858585; }

.styles-body { display: flex; padding-top: 10px; }
.w-cond { width: 90px; }
.w-table { width: 46px; margin-right: 10px; }
.gallery {
  width: 334px; height: 62px; box-sizing: border-box; border: 1px solid #8b8b8b; border-radius: 3px; margin-top: 2px; display: flex;
}
.swatches {
  width: 320px; display: grid; grid-template-columns: 103px 100px 100px; column-gap: 4px; row-gap: 5px; padding: 4px 0 0 2px; grid-auto-rows: 23px; font-size: 12px;
}
.swatches span { display: flex; align-items: center; padding-left: 5px; box-sizing: border-box; }
.s-normal { background: #fff; outline: 1px solid #6a6a6a; color: #000; }
.s-bad { background: #ffc7ce; color: #9c0006; }
.s-good { background: #c6efce; color: #006100; }
.s-neutral { background: #ffeb9c; color: #9c5700; }
.s-calc { background: #f2f2f2; border: 1px solid #7f7f7f; color: #fa7d00; font-weight: 700; }
.s-check { background: #a5a5a5; border: 3px double #3f3f3f; color: #fff; font-weight: 700; }
.gal-scroll { flex: 1; display: flex; flex-direction: column; border-left: 1px solid #8b8b8b; }
.gal-scroll span { flex: 1; display: flex; align-items: center; justify-content: center; border-bottom: 1px solid #8b8b8b; }
.gal-scroll span:last-child { border: none; }

.cells-body { display: flex; padding: 10px 0 0 8px; }
.w-cell { width: 44px; }

.edit-body { display: flex; padding: 3px 0 0 10px; }
.edit-rows { width: 96.5px; }
.eico { width: 22px; flex: none; }
.edit-rows .row .ch { margin-left: 3px; }
.edit-rows .row .sum-ch { margin-left: 13px; }
.w-sort { width: 46px; padding-top: 5px; }
.w-find { width: 48px; padding-top: 5px; }
.large-solo { display: flex; justify-content: center; padding-top: 8px; }
.large-solo .large { width: 100%; }
.large-solo .large > svg:first-child { height: 28px; margin-bottom: 5px; }
.collapse { position: absolute; right: 11px; bottom: 11px; }

/* formula bar */
.fbar {
  height: 41px; flex: none; box-sizing: border-box; padding: 8px 8px 7px; display: flex; background: #4d4d4d; color: #eee;
}
.namebox {
  width: 102px; height: 26px; box-sizing: border-box; border: 1px solid #7a7a7a; border-radius: 4px; display: flex; align-items: center; justify-content: space-between; padding: 0 8px 0 6px; font-size: 12.5px;
}
.fdots { width: 20px; text-align: center; line-height: 26px; color: #ccc; font-size: 13px; }
.fxbox {
  width: 74px; height: 26px; box-sizing: border-box; border: 1px solid #7a7a7a; border-radius: 4px; display: flex; align-items: center; gap: 8px; padding-left: 7px;
}
.fxbox em { font-family: "Liberation Serif", serif; font-size: 14px; color: #8a8a8a; }
.finput {
  flex: 1; margin-left: 4px; height: 26px; box-sizing: border-box; border: 1px solid #7a7a7a; border-radius: 4px; display: flex; align-items: center; justify-content: flex-end; padding-right: 4px;
}

/* sheet */
.main { height: 806px; flex: none; display: flex; background: #4d4d4d; }
.sheet-col { width: 1898px; flex: none; }
.colhead { display: grid; height: 17px; box-sizing: border-box; background: #5b5b5b; border-bottom: 1px solid #a8a8a8; font-family: "Liberation Sans", sans-serif; font-size: 12px; color: #ececec; }
.corner { position: relative; }
.corner i { position: absolute; right: 3px; bottom: 2px; width: 0; height: 0; border-left: 11px solid transparent; border-bottom: 11px solid #d4d4d4; }
.ch-cell { text-align: center; border-right: 1px solid #9a9a9a; line-height: 16px; overflow: hidden; white-space: nowrap; box-sizing: border-box; }
.ch-cell:last-child { border: none; }
.ch-cell.act { background: #707070; box-shadow: inset 0 -2px 0 #217346; }
.sheet { height: 789px; display: flex; overflow: hidden; background: #fff; }
.rowhead { width: 25px; flex: none; background: #5b5b5b; font-family: "Liberation Sans", sans-serif; font-size: 12px; color: #ececec; }
.rh-cell { box-sizing: border-box; border-bottom: 1px solid #9a9a9a; text-align: center; display: flex; align-items: center; justify-content: center; }
.rh-cell.act { background: #707070; box-shadow: inset -2px 0 0 #217346; }
/* the grid starts at page x=25, overlays are placed from there */
.grid {
  position: relative; display: grid; flex: none; align-content: start; height: 800px;
  font-family: "Liberation Sans", sans-serif; font-size: 11px; letter-spacing: .12px; color: #000; background: #fff;
}

.cell { display: flex; align-items: center; min-width: 0; white-space: nowrap; box-sizing: border-box; }
.bx { border: 2px solid #000; margin: -1px; }
.thin { border: 1px solid #000; }
.b { font-weight: 700; }
.plain { padding-left: 3px; }
.right { justify-content: flex-end; padding: 0 2px 0 0; }
.lab { padding-left: 2px; }
.ctr { justify-content: center; }
.num { justify-content: flex-end; padding-right: 1px; }
.unit { padding-left: 3px; }
.beige { background: #eeece1; }
.gray { background: #d9d9d9; }
.sky { background: #daeef3; }
.inp { background: #fff; color: #00f; }
.blue { color: #00f; background: #fff; }
.red { color: #f00; }
.lemon { background: #ffffcc; }
.green { background: #ccffcc; }
.warn { background: #ff0; color: #f00; }
.hline { border-bottom: 2px solid #000; margin-bottom: -1px; }
.vline { border-right: 2px solid #000; margin-right: -1px; }

.xl-btn {
  position: absolute; left: 295px; width: 195px; padding: 0; border: none; border-right: 2px solid #8a8a8a; border-bottom: 2px solid #8a8a8a;
  background: #f0f0f0; font-family: "Liberation Sans", sans-serif; font-weight: 700; font-size: 13.3px; color: #111;
}
.b-opt { top: 357px; height: 75px; }
.b-exp { top: 440px; height: 55px; }
.listbox {
  position: absolute; left: 283px; top: 539px; width: 88px; height: 44px; box-sizing: border-box; border: 1px solid #000; background: #fff; display: flex; font-size: 11px; line-height: 14px; letter-spacing: 0;
}
.lb-items { width: 64px; }
.lb-items div { padding-left: 4px; height: 13px; }
.lb-items .lb-sel { background: #0078d7; color: #fff; height: 14px; }
.lb-bar { flex: 1; background: #f0f0f0; }

.chart { position: absolute; }
.c1 { left: 512px; top: 3px; }
.c2 { left: 512px; top: 599px; }
.lbl { font-size: 10.67px; fill: #000; font-family: "Liberation Sans", sans-serif; }
.lbl-b { font-size: 10.67px; font-weight: 700; fill: #111; font-family: "Liberation Sans", sans-serif; }
.tooltip {
  position: absolute; left: 868px; top: 345px; width: 156px; height: 35px; box-sizing: border-box; padding: 2px 0 0 5px;
  background: linear-gradient(#fbfbfb, #e4e4e4); border: 1px solid #c4c4c4; border-radius: 2px; box-shadow: 1px 1px 2px rgba(0, 0, 0, .45);
  font-family: "Open Sans", sans-serif; font-size: 11.2px; line-height: 15px; letter-spacing: 0; color: #5f5f5f; white-space: nowrap;
}
.selection {
  position: absolute; left: 1286px; top: 454px; width: 95px; height: 19px; box-sizing: border-box; border: 2px solid #1d6f42;
}
.sel-fill { position: absolute; left: 1px; top: 1px; width: 39px; height: 13px; background: #c8c8c8; }
.handle { position: absolute; right: -3px; bottom: -3px; width: 5px; height: 5px; background: #1d6f42; border: 1px solid #fff; }

.vbar { width: 22px; flex: none; padding-left: 4px; box-sizing: border-box; }
.vtrack {
  width: 18px; height: 809px; background: #3f3f3f; border-radius: 9px 0 0 9px; display: flex; flex-direction: column; align-items: center; padding-top: 5px; box-sizing: border-box; position: relative; z-index: 2;
}
.vthumb { width: 10px; height: 54px; margin-top: 4px; background: #c8c8c8; border-radius: 5px 5px 0 0; }
.varrow.down { margin-top: auto; margin-bottom: 5px; }

/* sheet tabs */
.tabbar {
  height: 32px; flex: none; display: flex; align-items: center; color: #e6e6e6; font-size: 13px;
  background: linear-gradient(90deg, #4c4e56, #4c4f5a 60%, #4f4f50);
  border-bottom: 1px solid #3c3c3c; box-sizing: border-box; position: relative; z-index: 1;
}
.nav-arrow { width: 32px; display: flex; justify-content: center; }
.nav-arrow.first { margin-left: 16px; }
.stab { height: 20px; line-height: 20px; text-align: center; box-sizing: border-box; }
.s1 { margin-left: 45px; border-right: 1px solid #808080; padding-right: 14px; width: 52px; }
.active {
  align-self: flex-start; margin-left: 3px; width: 60px; height: 28px; background: #fff; color: #333; border-radius: 0 0 4px 4px; position: relative; line-height: 24px;
}
.active::after { content: ""; position: absolute; left: 8px; right: 8px; bottom: 3px; height: 2px; background: #217346; }
.s3 { margin-left: 4px; width: 69px; border-left: 1px solid #808080; border-right: 1px solid #808080; }
.plus { margin-left: 41px; display: flex; }
.hdots { margin-left: 783px; width: 10px; color: #ddd; font-size: 14px; text-align: center; }
.htrack {
  margin-left: 12px; width: 728px; height: 17px; background: #3f3f3f; border-radius: 8px; display: flex; align-items: center; padding: 0 4px; box-sizing: border-box;
}
.hthumb { width: 674px; height: 9px; margin-left: 5px; background: #c4c4c4; border-radius: 4px; }
.hright { margin-left: auto; }

/* status bar */
.status {
  height: 23px; flex: none; display: flex; align-items: center; background: #555; color: #eee; font-size: 11px;
}
.ready { margin-left: 12px; width: 49px; }
.acc-ico { width: 18px; }
.acc { white-space: nowrap; width: 1541px; }
.views { display: flex; height: 23px; }
.view { width: 40px; display: flex; align-items: center; justify-content: center; }
.view.on { background: #616161; }
.zoomer { display: flex; align-items: center; margin-left: 4px; }
.zm { width: 16px; text-align: center; font-size: 15px; line-height: 15px; color: #ddd; }
.slider { width: 99px; height: 1px; background: #cfcfcf; position: relative; }
.slider i { position: absolute; left: 48px; top: -5px; width: 4px; height: 11px; background: #bdbdbd; }
.pct { margin-left: 6px; white-space: nowrap; }
</style>
